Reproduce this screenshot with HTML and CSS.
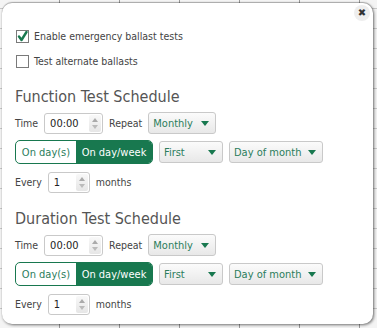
FILE: index.html
```html
<!DOCTYPE html>
<html lang="en">
<head>
    <meta charset="UTF-8">
    <title>Ballast Tests</title>
    <link rel="stylesheet" href="styles.css">
</head>
<body>
    <div class="popup">
        <button class="close">&#x2716;</button>

        <label class="check"><span class="box"><svg width="11" height="11" viewBox="0 0 11 11"><path d="M2 5.5 L4.5 9 L9.5 1" fill="none" stroke="#18784f" stroke-width="2.4" stroke-linecap="round" stroke-linejoin="round"/></svg></span>Enable emergency ballast tests</label>
        <label class="check"><span class="box"></span>Test alternate ballasts</label>

        <div class="schedule">
            <h2>Function Test Schedule</h2>
            <div class="row">
                <span class="lbl">Time</span>
                <div class="spin time"><span class="val">00:00</span><span class="arrows"><i class="up"></i><i class="down"></i></span></div>
                <span class="lbl">Repeat</span>
                <div class="select monthly">Monthly<i class="tri"></i></div>
            </div>
            <div class="row">
                <div class="toggle"><span class="opt">On day(s)</span><span class="opt active">On day/week</span></div>
                <div class="select first">First<i class="tri"></i></div>
                <div class="select dom">Day of month<i class="tri"></i></div>
            </div>
            <div class="row">
                <span class="lbl">Every</span>
                <div class="spin every"><span class="val">1</span><span class="arrows"><i class="up"></i><i class="down"></i></span></div>
                <span class="lbl">months</span>
            </div>
        </div>

        <div class="schedule">
            <h2>Duration Test Schedule</h2>
            <div class="row">
                <span class="lbl">Time</span>
                <div class="spin time"><span class="val">00:00</span><span class="arrows"><i class="up"></i><i class="down"></i></span></div>
                <span class="lbl">Repeat</span>
                <div class="select monthly">Monthly<i class="tri"></i></div>
            </div>
            <div class="row">
                <div class="toggle"><span class="opt">On day(s)</span><span class="opt active">On day/week</span></div>
                <div class="select first">First<i class="tri"></i></div>
                <div class="select dom">Day of month<i class="tri"></i></div>
            </div>
            <div class="row">
                <span class="lbl">Every</span>
                <div class="spin every"><span class="val">1</span><span class="arrows"><i class="up"></i><i class="down"></i></span></div>
                <span class="lbl">months</span>
            </div>
        </div>
    </div>
</body>
</html>
```

FILE: styles.css
```css
:root {
    --green: #18784f;
    --green-text: #2b7d5c;
    --text: #444444;
    --border: #c9c9c9;
}

body {
    margin: 0;
    font-family: "DejaVu Sans Condensed", "DejaVu Sans", sans-serif;
    font-stretch: condensed;
    font-size: 10.5px;
    color: var(--text);
    background-color: #f4f4f4;
    background-image: repeating-linear-gradient(90deg, transparent 0 59px, #9a9a9a 59px 60px),
        repeating-linear-gradient(0deg, transparent 0 19px, #c8c8c8 19px 20px);
    height: 328px;
    overflow: hidden;
}

.popup {
    position: relative;
    box-sizing: border-box;
    margin: 3px 4px 0 2px;
    height: 321px;
    background: #fff;
    border-radius: 10px;
    box-shadow: 1px 1px 3px rgba(0, 0, 0, 0.55), 0 -1px 1px rgba(0, 0, 0, 0.25);
    padding: 26px 13px 0 13px;
}

.close {
    position: absolute;
    top: 2px;
    right: 3px;
    width: 16px;
    height: 16px;
    border: none;
    border-radius: 50%;
    background: #eeeeee;
    color: #333;
    font-size: 10px;
    line-height: 16px;
    padding: 0;
    font-family: "DejaVu Sans", sans-serif;
}

.check {
    display: flex;
    align-items: center;
    gap: 5px;
    height: 14px;
    margin-bottom: 11px;
    margin-left: 1px;
    white-space: nowrap;
}

.check + .check {
    margin-bottom: 19px;
}

.box {
    box-sizing: border-box;
    display: flex;
    align-items: center;
    justify-content: center;
    width: 13px;
    height: 13px;
    border: 1px solid #7a7a7a;
    background: #fff;
}

.schedule h2 {
    font-size: 16px;
    font-weight: normal;
    color: #555;
    margin: 0 0 6px 0;
    height: 19px;
    line-height: 19px;
}

.schedule + .schedule {
    margin-top: 16px;
}

.row {
    display: flex;
    align-items: center;
    gap: 6px;
    height: 22px;
    margin-bottom: 7px;
    white-space: nowrap;
}

.row + .row + .row {
    margin-top: 8px;
}

.spin {
    box-sizing: border-box;
    display: flex;
    height: 21px;
    border: 1px solid var(--border);
    border-radius: 3px;
    background: #fff;
    color: #222;
    font-size: 11px;
    align-items: center;
}

.spin .val {
    flex: 1;
    padding-left: 5px;
}

.spin.time {
    width: 59px;
}

.spin.every {
    width: 42px;
}

.arrows {
    display: flex;
    flex-direction: column;
    justify-content: center;
    align-items: center;
    gap: 3px;
    width: 12px;
    height: 17px;
    margin-right: 1px;
    background: linear-gradient(#f8f8f8, #e6e6e6);
    border-radius: 2px;
}

.arrows i {
    width: 0;
    height: 0;
    border-left: 3px solid transparent;
    border-right: 3px solid transparent;
}

.arrows .up {
    border-bottom: 4px solid #aaa;
}

.arrows .down {
    border-top: 4px solid #bbb;
}

.select {
    box-sizing: border-box;
    display: flex;
    align-items: center;
    justify-content: space-between;
    height: 22px;
    padding: 0 6px 0 4px;
    border: 1px solid var(--border);
    border-radius: 3px;
    background: linear-gradient(#fbfbfb, #e8e8e8);
    color: var(--green-text);
    font-size: 11px;
}

.select.monthly {
    width: 68px;
}

.select.first {
    width: 64px;
}

.select.dom {
    width: 94px;
}

.tri {
    width: 0;
    height: 0;
    border-left: 4px solid transparent;
    border-right: 4px solid transparent;
    border-top: 5px solid var(--green);
}

.toggle {
    box-sizing: border-box;
    display: flex;
    width: 138px;
    height: 24px;
    border: 1px solid var(--green);
    border-radius: 5px;
    overflow: hidden;
    font-size: 11px;
}

.opt {
    display: flex;
    align-items: center;
    justify-content: center;
    color: var(--green-text);
    width: 60px;
}

.opt.active {
    flex: 1;
    background: var(--green);
    color: #fff;
}
```
